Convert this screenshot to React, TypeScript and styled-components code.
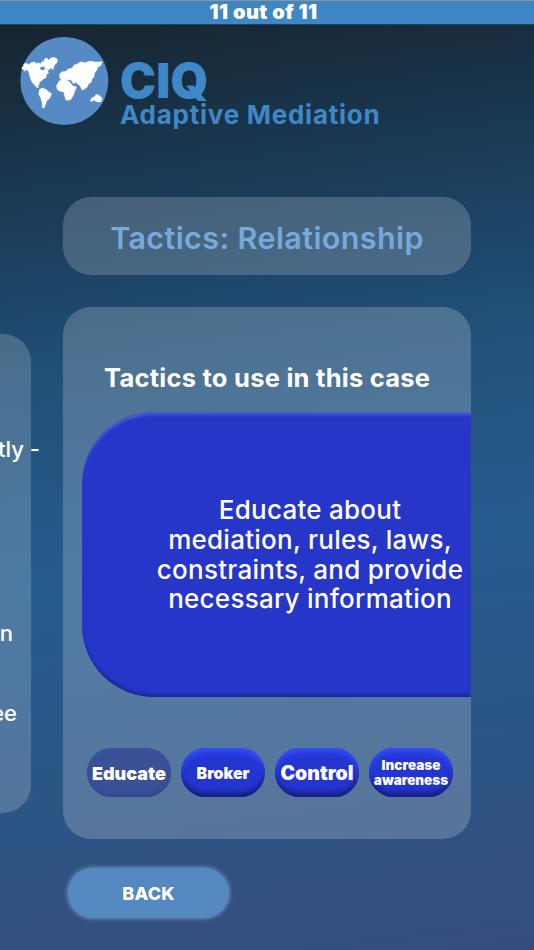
import React from "react";
import styled, { createGlobalStyle } from "styled-components";

const Global = createGlobalStyle`
  html, body { margin: 0; padding: 0; height: 100%; }
  body { font-family: Inter, "Open Sans", "Liberation Sans", sans-serif; }
`;

const Page = styled.div`
  width: 534px;
  height: 950px;
  overflow: hidden;
  background: linear-gradient(172deg, #16242e 2%, #1a3a55 20%, #215079 38%, #265c8e 58%, #2b5585 80%, #364c7e 100%);
  display: flex;
  flex-direction: column;
`;

const TopBar = styled.header`
  height: 23px;
  flex: none;
  background: #3f86c4;
  border-top: 1px solid #8b949b;
  color: #fff;
  font-size: 20px;
  font-weight: 900;
  line-height: 23px;
  text-align: center;
  letter-spacing: 0.45px;
  padding-right: 7px;
  box-shadow: 0 1px 0 #1d4463;
`;

const Brand = styled.div`
  display: flex;
  align-items: flex-start;
  gap: 11px;
  height: 88px;
  margin: 13px 0 0 20px;
  flex: none;
`;

const BrandText = styled.div`
  display: flex;
  flex-direction: column;
  color: #3f88c8;
`;

const BrandName = styled.div`
  font-size: 48px;
  font-weight: 900;
  line-height: 42px;
  margin-top: 23px;
  letter-spacing: 0.3px;
`;

const BrandSub = styled.div`
  font-size: 26px;
  line-height: 26px;
  font-weight: 700;
  letter-spacing: 0.75px;
  white-space: nowrap;
`;

const TitleCard = styled.div`
  flex: none;
  width: 408px;
  height: 78px;
  margin: 72px 0 0 63px;
  border-radius: 28px;
  background: rgba(255, 255, 255, 0.19);
  color: #78a9dd;
  display: flex;
  align-items: center;
  justify-content: center;
  font-size: 30.5px;
  font-weight: 600;
  letter-spacing: 0.4px;
  padding: 2px 0 0 0;
  box-sizing: border-box;
`;

const Carousel = styled.div`
  flex: none;
  display: flex;
  align-items: flex-start;
  gap: 32px;
  margin: 32px 0 0 -377px;
`;

const SideCard = styled.div`
  flex: none;
  width: 408px;
  height: 479px;
  margin-top: 27px;
  border-radius: 28px;
  background: rgba(255, 255, 255, 0.19);
  color: #fff;
  font-size: 22px;
  font-weight: 500;
  position: relative;
`;

const SideLine = styled.span<{ $top: number; $right: number }>`
  position: absolute;
  top: ${(p) => p.$top}px;
  right: ${(p) => p.$right}px;
  line-height: 28px;
  white-space: nowrap;
`;

const MainCard = styled.section`
  flex: none;
  width: 408px;
  height: 532px;
  border-radius: 28px;
  background: rgba(255, 255, 255, 0.2);
  overflow: hidden;
  display: flex;
  flex-direction: column;
`;

const CardHeading = styled.h2`
  margin: 54px 0 0 41px;
  color: #fff;
  font-size: 25.5px;
  line-height: 34px;
  font-weight: 700;
  white-space: nowrap;
  letter-spacing: 0.25px;
`;

const Panel = styled.div`
  margin: 17px 0 0 19px;
  width: 389px;
  height: 285px;
  flex: none;
  box-sizing: border-box;
  background: #2536c8;
  border-radius: 72px 0 0 72px;
  box-shadow: inset 0 4px 3px -1px #4d5ad4, inset 0 -4px 3px -1px #1c289c;
  color: #fff;
  font-size: 26px;
  line-height: 29.6px;
  font-weight: 500;
  text-align: center;
  display: flex;
  align-items: center;
  justify-content: center;
  padding: 0 0 0 67px;
  letter-spacing: 0.25px;
  white-space: nowrap;
`;

const Tabs = styled.div`
  display: flex;
  gap: 10px;
  margin: 51px 0 0 24px;
`;

const Tab = styled.button<{ $size: number; $active?: boolean }>`
  width: 84px;
  height: 49px;
  flex: none;
  border: 0;
  padding: 1px 0 0;
  border-radius: 25px;
  color: #fff;
  font-family: inherit;
  font-weight: 900;
  font-size: ${(p) => p.$size}px;
  line-height: 15px;
  background: ${(p) => (p.$active ? "#3a5196" : "#2436d0")};
  box-shadow: ${(p) =>
    p.$active
      ? "inset 0 3px 4px -1px rgba(60,85,170,.7), inset 0 -3px 4px -1px rgba(40,60,130,.5)"
      : "inset 0 7px 6px -3px #3450ff, inset 0 -7px 6px -3px #131b74"};
`;

const BackButton = styled.button`
  flex: none;
  width: 161px;
  height: 50px;
  margin: 29px 0 0 68px;
  border: 0;
  border-radius: 25px;
  background: #5389c0;
  box-shadow: 0 0 5px rgba(200, 220, 240, 0.6);
  color: #fff;
  font-family: inherit;
  font-size: 18px;
  font-weight: 800;
  letter-spacing: 0.2px;
`;

const Globe = () => (
  <svg width="89" height="88" viewBox="30 20 267 264" style={{ flex: "none" }}>
    <circle cx="163" cy="152" r="132" fill="#568ac5" />
    <g fill="#fff" stroke="#fff" strokeWidth="1" strokeLinejoin="miter">
      <path d="M36 110 L42 106 L40 101 L50 99 L56 103 L63 97 L74 95 L80 100 L86 97 L92 100 L97 92 L102 96 L103 86 L110 83 L117 90 L121 84 L132 81 L143 87 L141 97 L134 103 L129 118 L122 112 L118 118 L112 118 L116 128 L110 132 L108 142 L100 146 L94 152 L88 156 L87 165 L83 166 L86 173 L78 170 L72 162 L66 156 L61 144 L57 128 L52 118 L42 123 L44 116 L36 118 Z" />
      <path d="M90 112 L100 108 L106 114 L100 120 L92 118 Z" fill="#568ac5" stroke="none" />
      <path d="M88 178 L96 173 L108 177 L116 184 L125 190 L120 203 L110 212 L107 222 L102 234 L97 232 L96 216 L92 203 L86 191 Z" />
      <path d="M148 132 L156 124 L168 123 L174 116 L186 113 L192 104 L204 100 L210 94 L226 97 L240 92 L256 95 L277 94 L272 106 L264 110 L259 122 L254 127 L252 140 L246 146 L244 156 L236 160 L232 170 L224 176 L216 180 L210 166 L204 162 L198 156 L190 160 L184 150 L172 148 L160 150 L150 146 Z" />
      <path d="M139 167 L148 151 L160 148 L172 150 L180 156 L188 166 L200 170 L194 184 L190 196 L181 209 L168 210 L164 198 L161 185 L150 183 L142 178 Z" />
      <path d="M241 210 L246 202 L254 199 L258 192 L266 194 L277 204 L273 215 L262 215 L252 210 L244 214 Z" />
    </g>
  </svg>
);

export default function App() {
  return (
    <Page>
      <Global />
      <TopBar>11 out of 11</TopBar>
      <Brand>
        <Globe />
        <BrandText>
          <BrandName>CIQ</BrandName>
          <BrandSub>Adaptive Mediation</BrandSub>
        </BrandText>
      </Brand>
      <TitleCard>Tactics: Relationship</TitleCard>
      <Carousel>
        <SideCard>
          <SideLine $top={101} $right={-9}>tly -</SideLine>
          <SideLine $top={285} $right={18}>n</SideLine>
          <SideLine $top={365} $right={14}>ee</SideLine>
        </SideCard>
        <MainCard>
          <CardHeading>Tactics to use in this case</CardHeading>
          <Panel>
            <span>
              Educate about
              <br />
              mediation, rules, laws,
              <br />
              constraints, and provide
              <br />
              necessary information
            </span>
          </Panel>
          <Tabs>
            <Tab $size={18} $active>Educate</Tab>
            <Tab $size={16}>Broker</Tab>
            <Tab $size={19.5}>Control</Tab>
            <Tab $size={13.5}>Increase awareness</Tab>
          </Tabs>
        </MainCard>
      </Carousel>
      <BackButton>BACK</BackButton>
    </Page>
  );
}
